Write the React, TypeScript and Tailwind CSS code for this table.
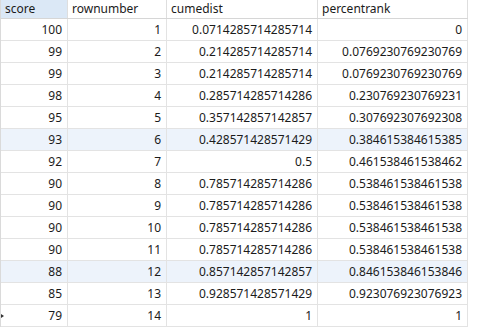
import React from "react";

const rows: [string, string, string, string][] = [
  ["100", "1", "0.0714285714285714", "0"],
  ["99", "2", "0.214285714285714", "0.0769230769230769"],
  ["99", "3", "0.214285714285714", "0.0769230769230769"],
  ["98", "4", "0.285714285714286", "0.230769230769231"],
  ["95", "5", "0.357142857142857", "0.307692307692308"],
  ["93", "6", "0.428571428571429", "0.384615384615385"],
  ["92", "7", "0.5", "0.461538461538462"],
  ["90", "8", "0.785714285714286", "0.538461538461538"],
  ["90", "9", "0.785714285714286", "0.538461538461538"],
  ["90", "10", "0.785714285714286", "0.538461538461538"],
  ["90", "11", "0.785714285714286", "0.538461538461538"],
  ["88", "12", "0.857142857142857", "0.846153846153846"],
  ["85", "13", "0.928571428571429", "0.923076923076923"],
  ["79", "14", "1", "1"],
];

const widths = ["w-[67px]", "w-[99px]", "w-[151px]", "w-[150px]"];

export default function App() {
  return (
    <div
      className="w-[502px] h-[330px] bg-white overflow-hidden text-[12px] text-[#1b1b1b]"
      style={{ fontFamily: '"Noto Sans", "Noto Sans CJK SC", sans-serif' }}
    >
      <div className="flex flex-col w-[468px] border-l border-[#dadada]">
        <div className="flex h-[19px] border-b border-[#d6d6d6]">
          {["score", "rownumber", "cumedist", "percentrank"].map((h, i) => (
            <div
              key={h}
              className={`${widths[i]} shrink-0 border-r border-[#dedede] pl-[4px] flex items-center leading-none ${
                i === 0 ? "bg-[#dbe8f6]" : "bg-white"
              }`}
            >
              {h}
            </div>
          ))}
        </div>
        {rows.map((r, ri) => {
          const hl = ri === 5 || ri === 11;
          const last = ri === rows.length - 1;
          return (
            <div
              key={ri}
              className={`relative flex h-[22px] border-b border-[#e3e3e3] ${hl ? "bg-[#edf3fb]" : "bg-white"}`}
            >
              {last && (
                <div className="absolute left-0 top-[9px] w-0 h-0 border-y-[2px] border-y-transparent border-l-[3px] border-l-[#333]" />
              )}
              {r.map((c, ci) => (
                <div
                  key={ci}
                  className={`${widths[ci]} shrink-0 border-r border-[#e3e3e3] pr-[5px] flex items-center justify-end leading-none`}
                >
                  {c}
                </div>
              ))}
            </div>
          );
        })}
      </div>
    </div>
  );
}
